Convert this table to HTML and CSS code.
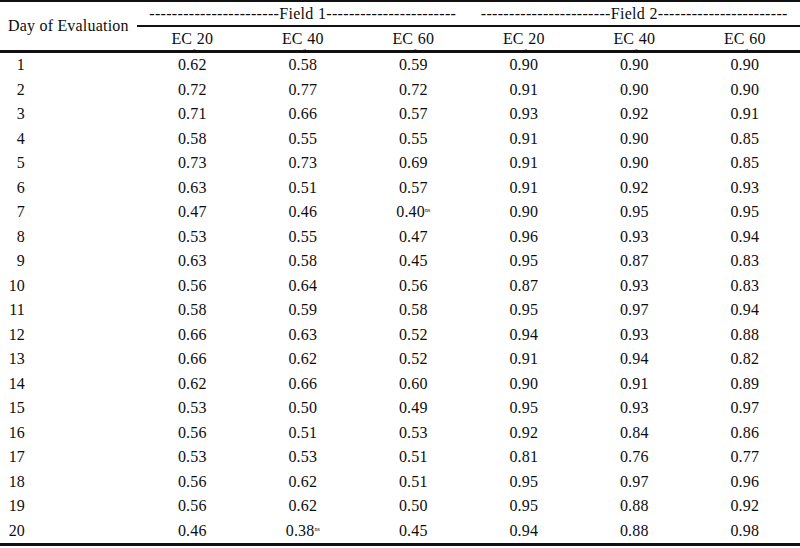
FILE: index.html
```html
<!DOCTYPE html>
<html>
<head>
<meta charset="utf-8">
<link rel="stylesheet" href="styles.css">
</head>
<body>
<table class="tbl">
  <colgroup><col class="c0"><col class="cd"><col class="cd"><col class="cd"><col class="cd"><col class="cd"><col class="cd"></colgroup>
  <thead>
    <tr class="r1">
      <th rowspan="2" class="day">Day of Evaluation</th>
      <th colspan="3" class="field">-----------------------Field 1-----------------------</th>
      <th colspan="3" class="field">-----------------------Field 2-----------------------</th>
    </tr>
    <tr class="r2">
      <th>EC<sub class="sb">a</sub>20</th><th>EC<sub class="sb">a</sub>40</th><th>EC<sub class="sb">a</sub>60</th>
      <th>EC<sub class="sb">a</sub>20</th><th>EC<sub class="sb">a</sub>40</th><th>EC<sub class="sb">a</sub>60</th>
    </tr>
  </thead>
  <tbody>
    <tr><td class="d"><span class="n">1</span></td><td>0.62</td><td>0.58</td><td>0.59</td><td>0.90</td><td>0.90</td><td>0.90</td></tr>
    <tr><td class="d"><span class="n">2</span></td><td>0.72</td><td>0.77</td><td>0.72</td><td>0.91</td><td>0.90</td><td>0.90</td></tr>
    <tr><td class="d"><span class="n">3</span></td><td>0.71</td><td>0.66</td><td>0.57</td><td>0.93</td><td>0.92</td><td>0.91</td></tr>
    <tr><td class="d"><span class="n">4</span></td><td>0.58</td><td>0.55</td><td>0.55</td><td>0.91</td><td>0.90</td><td>0.85</td></tr>
    <tr><td class="d"><span class="n">5</span></td><td>0.73</td><td>0.73</td><td>0.69</td><td>0.91</td><td>0.90</td><td>0.85</td></tr>
    <tr><td class="d"><span class="n">6</span></td><td>0.63</td><td>0.51</td><td>0.57</td><td>0.91</td><td>0.92</td><td>0.93</td></tr>
    <tr><td class="d"><span class="n">7</span></td><td>0.47</td><td>0.46</td><td>0.40<sup class="ns">ns</sup></td><td>0.90</td><td>0.95</td><td>0.95</td></tr>
    <tr><td class="d"><span class="n">8</span></td><td>0.53</td><td>0.55</td><td>0.47</td><td>0.96</td><td>0.93</td><td>0.94</td></tr>
    <tr><td class="d"><span class="n">9</span></td><td>0.63</td><td>0.58</td><td>0.45</td><td>0.95</td><td>0.87</td><td>0.83</td></tr>
    <tr><td class="d"><span class="n">10</span></td><td>0.56</td><td>0.64</td><td>0.56</td><td>0.87</td><td>0.93</td><td>0.83</td></tr>
    <tr><td class="d"><span class="n">11</span></td><td>0.58</td><td>0.59</td><td>0.58</td><td>0.95</td><td>0.97</td><td>0.94</td></tr>
    <tr><td class="d"><span class="n">12</span></td><td>0.66</td><td>0.63</td><td>0.52</td><td>0.94</td><td>0.93</td><td>0.88</td></tr>
    <tr><td class="d"><span class="n">13</span></td><td>0.66</td><td>0.62</td><td>0.52</td><td>0.91</td><td>0.94</td><td>0.82</td></tr>
    <tr><td class="d"><span class="n">14</span></td><td>0.62</td><td>0.66</td><td>0.60</td><td>0.90</td><td>0.91</td><td>0.89</td></tr>
    <tr><td class="d"><span class="n">15</span></td><td>0.53</td><td>0.50</td><td>0.49</td><td>0.95</td><td>0.93</td><td>0.97</td></tr>
    <tr><td class="d"><span class="n">16</span></td><td>0.56</td><td>0.51</td><td>0.53</td><td>0.92</td><td>0.84</td><td>0.86</td></tr>
    <tr><td class="d"><span class="n">17</span></td><td>0.53</td><td>0.53</td><td>0.51</td><td>0.81</td><td>0.76</td><td>0.77</td></tr>
    <tr><td class="d"><span class="n">18</span></td><td>0.56</td><td>0.62</td><td>0.51</td><td>0.95</td><td>0.97</td><td>0.96</td></tr>
    <tr><td class="d"><span class="n">19</span></td><td>0.56</td><td>0.62</td><td>0.50</td><td>0.95</td><td>0.88</td><td>0.92</td></tr>
    <tr class="last"><td class="d"><span class="n">20</span></td><td>0.46</td><td>0.38<sup class="ns">ns</sup></td><td>0.45</td><td>0.94</td><td>0.88</td><td>0.98</td></tr>
  </tbody>
</table>
</body>
</html>
```

FILE: styles.css
```css
html, body {
  margin: 0;
  padding: 0;
  background: #fff;
}
body {
  font-family: "Liberation Serif", "Times New Roman", serif;
  font-size: 16px;
  letter-spacing: 0.15px;
  color: #0d0d0d;
}
.tbl {
  width: 800px;
  table-layout: fixed;
  border-collapse: separate;
  border-spacing: 0;
  border-top: 2px solid #111;
}
.c0 { width: 137px; }
th, td {
  padding: 0;
  font-weight: normal;
  text-align: center;
  vertical-align: middle;
  white-space: nowrap;
}
.r1 th { height: 23px; }
.field {
  border-bottom: 2px solid #111;
  letter-spacing: 0.32px;
}
.day {
  text-align: left;
  padding-left: 8px;
  border-bottom: 3px solid #111;
  letter-spacing: 0.2px;
}
.r2 th {
  height: 23px;
  border-bottom: 3px solid #111;
}
.sb {
  font-size: 8px;
  vertical-align: baseline;
  position: relative;
  top: 9px;
  margin: 0 1px 0 0;
  letter-spacing: 0;
}
tbody td { height: 24.5px; }
.d { text-align: left; padding-left: 8px; }
.n {
  display: inline-block;
  width: 17px;
  text-align: right;
}
.ns {
  font-size: 6px;
  vertical-align: 5px;
  letter-spacing: 0;
  line-height: 0;
}
.last td { border-bottom: 3px solid #111; }
```
